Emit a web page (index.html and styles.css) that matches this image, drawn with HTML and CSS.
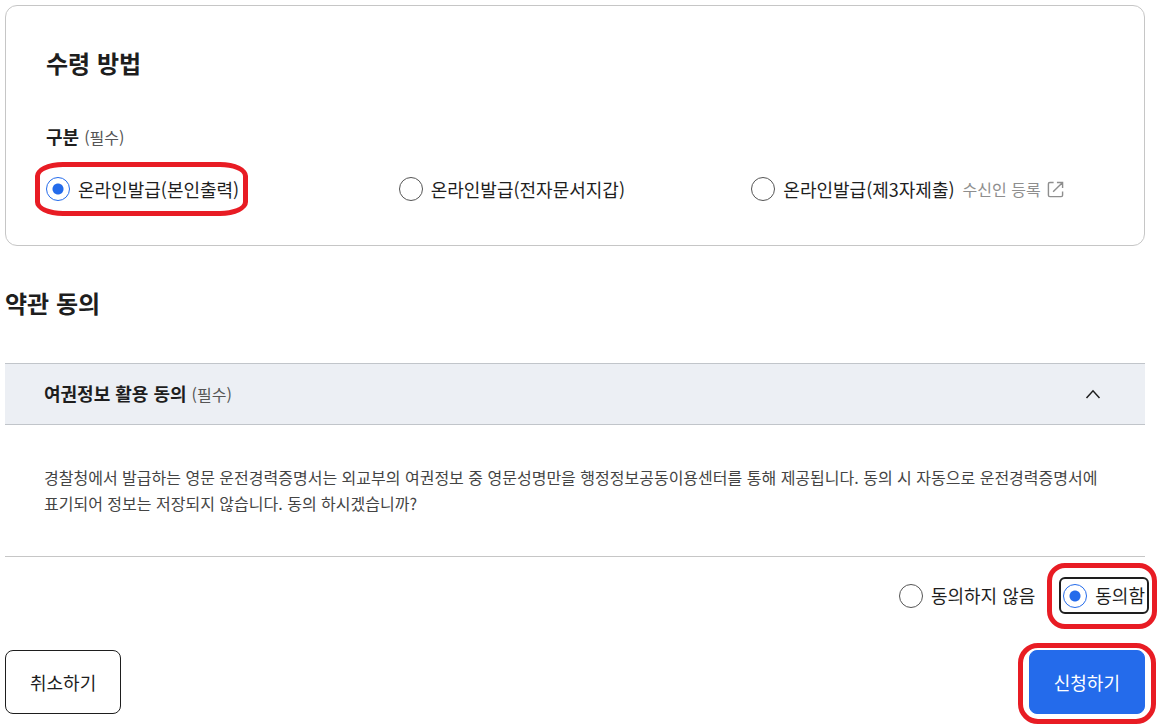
FILE: index.html
```html
<!DOCTYPE html>
<html lang="ko">
<head>
<meta charset="utf-8">
<meta name="viewport" content="width=device-width, initial-scale=1">
<title>수령 방법</title>
<link rel="stylesheet" href="styles.css">
</head>
<body>
<form class="page">
  <section class="card">
    <h2 class="title">수령 방법</h2>
    <fieldset class="group">
      <legend class="legend">구분 <span class="required">(필수)</span></legend>
      <div class="options">
        <div class="option">
          <label class="choice marked marked-option"><input class="radio" type="radio" name="method" checked><span>온라인발급(본인출력)</span></label>
        </div>
        <div class="option">
          <label class="choice"><input class="radio" type="radio" name="method"><span>온라인발급(전자문서지갑)</span></label>
        </div>
        <div class="option">
          <label class="choice"><input class="radio" type="radio" name="method"><span>온라인발급(제3자제출)</span></label>
          <a class="register" href="#">수신인 등록
            <svg class="external" viewBox="0 0 18 18" aria-hidden="true"><path d="M7 1.5H3Q1.500 1.500 1.500 3V15Q1.500 16.500 3 16.500H15Q16.500 16.500 16.500 15V11M10.500 1.500H16.500V7.500M16.500 1.500L6.500 11.500"/></svg>
          </a>
        </div>
      </div>
    </fieldset>
  </section>

  <section class="terms">
    <h2 class="title">약관 동의</h2>
    <div class="accordion">
      <button class="accordion-head" type="button" aria-expanded="true">
        <span class="accordion-title">여권정보 활용 동의 <span class="required">(필수)</span></span>
        <svg class="chevron" viewBox="0 0 16 10" aria-hidden="true"><path d="M1.500 9L8 1.800L14.500 9"/></svg>
      </button>
      <p class="accordion-body">경찰청에서 발급하는 영문 운전경력증명서는 외교부의 여권정보 중 영문성명만을 행정정보공동이용센터를 통해 제공됩니다. 동의 시 자동으로 운전경력증명서에 표기되어 정보는 저장되지 않습니다. 동의 하시겠습니까?</p>
    </div>
    <div class="consent">
      <label class="choice"><input class="radio" type="radio" name="consent"><span>동의하지 않음</span></label>
      <label class="choice focused marked marked-consent"><input class="radio" type="radio" name="consent" checked><span>동의함</span></label>
    </div>
  </section>

  <div class="actions">
    <button class="button" type="button">취소하기</button>
    <button class="button primary marked marked-submit" type="submit">신청하기</button>
  </div>
</form>
</body>
</html>
```
FILE: styles.css
```css
* {
  box-sizing: border-box;
}

body {
  margin: 0;
  background: #fff;
  color: #1e1e1e;
  font-family: "Noto Sans CJK KR", "Noto Sans", sans-serif;
  font-size: 18px;
  line-height: 26px;
  word-break: keep-all;
}

button {
  font: inherit;
  color: inherit;
}

.page {
  padding: 5px 15px 11px 5px;
}

.card {
  padding: 39px 40px 43px;
  border: 1px solid #c6c6c6;
  border-radius: 12px;
}

.title {
  margin: 0;
  font-size: 24px;
  font-weight: 700;
  line-height: 36px;
}

.group {
  min-width: 0;
  margin: 42px 0 0;
  padding: 0;
  border: 0;
}

.legend {
  padding: 0;
  font-weight: 700;
}

.required {
  color: #555;
  font-size: 16px;
  font-weight: 400;
}

.options {
  display: grid;
  grid-template-columns: repeat(3, 1fr);
  padding-top: 26px;
}

.option {
  display: flex;
  align-items: center;
  gap: 8px;
}

.choice {
  display: inline-flex;
  align-items: center;
  gap: 8px;
  white-space: nowrap;
}

.radio {
  appearance: none;
  flex: none;
  width: 24px;
  height: 24px;
  margin: 0;
  border: 1px solid #555;
  border-radius: 50%;
  background: #fff;
}

.radio:checked {
  border-color: #246beb;
  background: radial-gradient(circle, #246beb 5px, #fff 6px);
}

.register {
  display: inline-flex;
  align-items: center;
  gap: 6px;
  color: #8e8e8e;
  font-size: 16px;
  text-decoration: none;
  white-space: nowrap;
}

.external {
  width: 17px;
  height: 17px;
  fill: none;
  stroke: currentColor;
  stroke-width: 1.5;
}

.terms {
  margin-top: 39px;
}

.accordion {
  margin-top: 42px;
  border-bottom: 1px solid #c6c6c6;
}

.accordion-head {
  display: flex;
  align-items: center;
  justify-content: space-between;
  width: 100%;
  padding: 16px 44px 17px 39px;
  border: solid #c1c5ca;
  border-width: 1px 0;
  background: #eceff4;
  text-align: left;
}

.accordion-title {
  font-weight: 700;
}

.chevron {
  width: 16px;
  height: 10px;
  fill: none;
  stroke: #1e1e1e;
  stroke-width: 1.5;
}

.accordion-body {
  margin: 0;
  padding: 39px 39px 40px;
  color: #444;
  font-size: 16px;
}

.consent {
  display: flex;
  justify-content: flex-end;
  gap: 28px;
  margin-top: 24px;
  line-height: 29px;
}

.focused {
  outline: 2px solid #1e1e1e;
  outline-offset: 2px;
  border-radius: 2px;
}

.actions {
  display: flex;
  justify-content: space-between;
  margin-top: 40px;
}

.button {
  padding: 18px 24px;
  border: 1px solid #1e1e1e;
  border-radius: 8px;
  background: #fff;
}

.primary {
  border-color: #246beb;
  background: #246beb;
  color: #fff;
}

/* Red guide rings around the controls to press */
.marked {
  position: relative;
}

.marked::after {
  content: "";
  position: absolute;
  border: 5px solid #e81c24;
  pointer-events: none;
}

.marked-option::after {
  inset: -14px -9px -14px -11px;
  border-radius: 28px / 14px;
}

.marked-consent::after {
  inset: -18px -12px -19px -16px;
  border-radius: 18px;
}

.marked-submit::after {
  inset: -8px -12px -11px -12px;
  border-radius: 20px;
}
```
